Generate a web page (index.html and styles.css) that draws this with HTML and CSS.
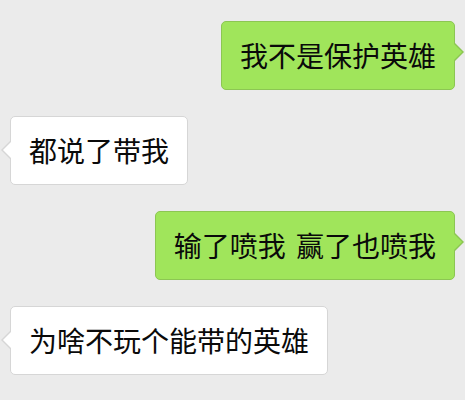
FILE: index.html
```html
<!DOCTYPE html>
<html>
<head>
    <title>聊天记录</title>
    <meta charset="UTF-8">
    <link rel="stylesheet" href="styles.css">
</head>
<body>
    <div class="chat">
        <div class="row me">
            <div class="bubble">我不是保护英雄</div>
        </div>
        <div class="row them">
            <div class="bubble">都说了带我</div>
        </div>
        <div class="row me">
            <div class="bubble">输了喷我 赢了也喷我</div>
        </div>
        <div class="row them">
            <div class="bubble">为啥不玩个能带的英雄</div>
        </div>
    </div>
</body>
</html>
```

FILE: styles.css
```css
:root {
    --bg: #ebebeb;
    --green: #a0e55b;
    --green-border: #8cc653;
    --white-border: #d6d6d6;
}

body {
    margin: 0;
    background: var(--bg);
    font-family: "Noto Sans CJK SC", "Noto Sans", sans-serif;
}

.chat {
    display: flex;
    flex-direction: column;
    gap: 26px;
    padding: 21px 10px;
}

.row {
    display: flex;
}

.row.me {
    justify-content: flex-end;
}

.bubble {
    position: relative;
    font-size: 28px;
    line-height: 29px;
    padding: 19px 18px;
    border-radius: 5px;
    color: #0a0a0a;
    word-spacing: 4px;
    white-space: pre;
}

.me .bubble {
    background: var(--green);
    border: 1px solid var(--green-border);
}

.them .bubble {
    background: #fff;
    border: 1px solid var(--white-border);
}

/* tails: outer triangle is the border, inner one the fill */
.bubble::before,
.bubble::after {
    content: '';
    position: absolute;
    width: 0;
    height: 0;
    border-style: solid;
    border-color: transparent;
}

.me .bubble::before {
    top: 21px;
    right: -10px;
    border-width: 9px 0 9px 9px;
    border-left-color: var(--green-border);
}

.me .bubble::after {
    top: 22px;
    right: -8px;
    border-width: 8px 0 8px 8px;
    border-left-color: var(--green);
}

.them .bubble::before {
    top: 24px;
    left: -10px;
    border-width: 9px 9px 9px 0;
    border-right-color: var(--white-border);
}

.them .bubble::after {
    top: 25px;
    left: -8px;
    border-width: 8px 8px 8px 0;
    border-right-color: #fff;
}
```
